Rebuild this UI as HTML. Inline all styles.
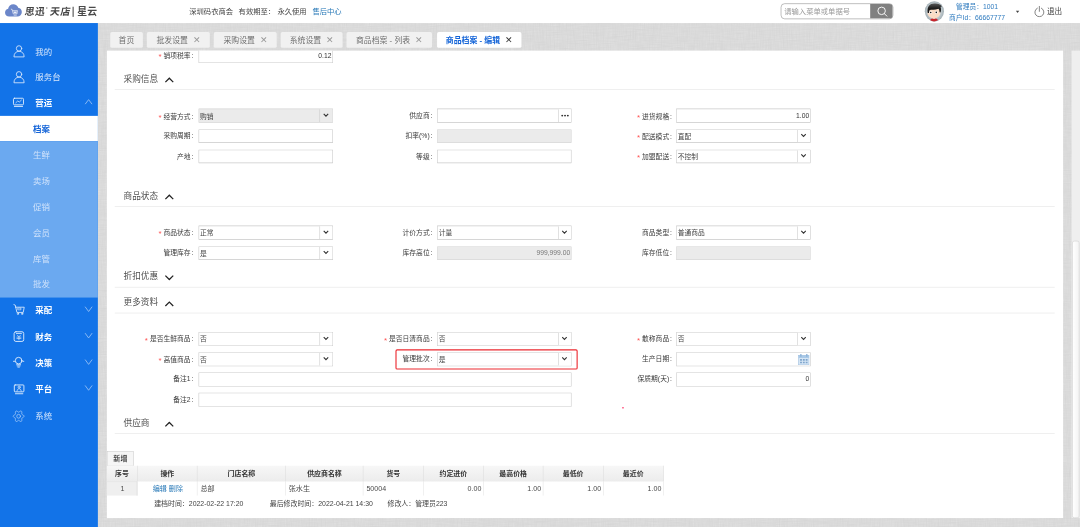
<!DOCTYPE html>
<html lang="zh-CN"><head><meta charset="utf-8"><title>商品档案 - 编辑</title>
<style>
*{box-sizing:border-box;margin:0;padding:0}
html,body{width:1080px;height:527px;overflow:hidden;background:#dbdbdb}
body{font-family:"Liberation Sans","Noto Sans CJK SC",sans-serif;}
#w{position:absolute;left:0;top:0;width:1920px;height:937px;transform:scale(0.5625);transform-origin:0 0;overflow:hidden;background:#dbdbdb;font-size:12px;color:#333}
.a{position:absolute;white-space:nowrap}
#hd{left:0;top:0;width:1920px;height:40.89px;background:#fff}
#sb{left:0;top:40.89px;width:174.22px;height:900px;background:#1273e8}
.tab{height:28.27px;top:56.89px;background:#f1f1f1;border-radius:3px;font-size:14px;color:#707070;line-height:30.04px;text-align:center}
.tab.on{background:#fff;color:#1565d8;font-weight:bold}
.tab i{font-style:normal;margin-left:9px;color:#999;font-weight:normal;font-size:15.500px}
.tab.on i{color:#333}
#pn{left:189.69px;top:90.13px;width:1700.09px;height:830.76px;background:#fff}
.lb{font-size:12.050px;color:#3a3a3a;text-align:right;width:200px;line-height:26px;height:26px}
.lb b{color:#f55;font-weight:normal;margin-right:3.500px;position:relative;top:2px;font-size:14px}
.lb u{text-decoration:none;margin-left:1.500px}
.in{height:24.500px;width:239px;border:1px solid #c9c9c9;border-radius:0.500px;background:#fff;font-size:12px;line-height:22.500px;padding:1.200px 1.200px 0 2.200px;color:#444;overflow:hidden}
.in.dis{background:#ebebeb;border-color:#d6d6d6}
.in.r{text-align:right;padding-top:0;line-height:22px;color:#333}
.in .bt{position:absolute;right:0;top:0;width:23px;height:22.500px;border-left:1px solid #c9c9c9;background:#fff}
.in.dis .bt{background:#ebebeb}
.sec{font-size:15.400px;color:#505050;line-height:20px}
.ln{height:1px;background:#e2e2e2;left:204.44px;width:1670.76px}
</style></head>
<body><div id="w">
<svg class="a" style="left:0;top:0" width="1920" height="937"><filter id="lin" x="0" y="0" width="100%" height="100%"><feTurbulence type="fractalNoise" baseFrequency="0.040 0.700" numOctaves="2" seed="3" result="h"/><feTurbulence type="fractalNoise" baseFrequency="0.700 0.040" numOctaves="2" seed="8" result="v"/><feBlend in="h" in2="v" mode="multiply"/><feColorMatrix type="matrix" values="0 0 0 0 1  0 0 0 0 1  0 0 0 0 1  0.400 0 0 0 -0.050"/></filter><rect width="1920" height="937" fill="#d5d5d5"/><rect width="1920" height="937" filter="url(#lin)"/></svg>
<div class="a" id="hd"></div>
<svg class="a" style="left:7.11px;top:3.56px" width="35.56px" height="28.44px" viewBox="4 2 20 16"><path d="M9.200 16.300C6.800 16.300 5.100 14.600 5.100 12.400c0-2 1.300-3.500 3.100-3.900C8.600 5.900 10.700 3.900 13.400 3.900c2.300 0 4.200 1.400 4.900 3.500 2 .2 3.600 2 3.600 4.300 0 2.600-1.900 4.600-4.400 4.600z" fill="#6b86c9"/><path d="M11 8.900l1.200.3 1.200 4.500h3.600l.5-3.300h-4.800" fill="none" stroke="#f2f5fb" stroke-width="0.700" stroke-linejoin="round"/><path d="M13.600 11.300h3.200l-.3 1.700h-2.500z" fill="#e8edf8"/><path d="M13.800 15.100h3" stroke="#dfe6f5" stroke-width="0.600"/></svg>
<div class="a" style="left:44.09px;font-size:17.500px;color:#444;line-height:21.33px;top:10.84px;font-weight:bold;transform:skewX(-9deg);letter-spacing:0.800px">思迅</div>
<div class="a" style="left:81.42px;top:10.67px;font-size:9px;color:#555;line-height:10px">°</div>
<div class="a" style="left:89.24px;font-size:17.500px;color:#444;line-height:21.33px;top:10.84px;font-weight:bold;transform:skewX(-9deg);letter-spacing:0.800px">天店</div>
<div class="a" style="left:128.89px;top:12.44px;width:2px;height:17.42px;background:#555"></div>
<div class="a" style="left:137.24px;font-size:17.500px;color:#444;line-height:21.33px;top:10.84px;font-weight:bold;color:#4a4a4a;letter-spacing:0.300px">星云</div>
<div class="a" style="left:336.36px;top:7.11px;font-size:13px;color:#444;line-height:26.67px">深圳码衣商会</div>
<div class="a" style="left:424.18px;top:7.11px;font-size:13px;color:#444;line-height:26.67px">有效期至：</div>
<div class="a" style="left:493.16px;top:7.11px;font-size:13px;color:#444;line-height:26.67px">永久使用</div>
<div class="a" style="left:555.38px;top:7.11px;font-size:13px;color:#2a7ab8;line-height:26.67px">售后中心</div>
<div class="a" style="left:1387.73px;top:5.69px;width:200.00px;height:28.09px;border:1px solid #8c8c8c;border-radius:7px;background:#fff;overflow:hidden"><span class="a" style="left:5.500px;top:0;line-height:26.67px;font-size:13px;color:#999">请输入菜单或单据号</span><span class="a" style="right:0;top:0;width:39.47px;height:100%;background:#808080"></span><svg class="a" style="right:7.47px;top:3.73px" width="21.33px" height="21.33px" viewBox="0 0 24 24"><circle cx="10.500" cy="10.500" r="7.500" fill="none" stroke="#fff" stroke-width="1.800"/><path d="M16 16l5 5" stroke="#fff" stroke-width="1.800" stroke-linecap="round"/></svg></div>
<svg class="a" style="left:1632.00px;top:0" width="56.89px" height="42.67px" viewBox="918 0 32 24"><defs><radialGradient id="avg" cx="50%" cy="50%" r="50%"><stop offset="0" stop-color="#e3e8ea"/><stop offset="0.650" stop-color="#c6cfd3"/><stop offset="1" stop-color="#a3afb5"/></radialGradient><linearGradient id="hr" x1="0" y1="0" x2="0" y2="1"><stop offset="0" stop-color="#555"/><stop offset="0.500" stop-color="#1e1e1e"/><stop offset="1" stop-color="#111"/></linearGradient></defs><ellipse cx="934.4" cy="11.300" rx="9.600" ry="10.100" fill="url(#avg)"/><path d="M930 20.100Q930.800 18.200 934 18.200Q937.300 18.200 938.100 20.100Q936.200 21.400 934 21.400Q931.800 21.400 930 20.100z" fill="#c9252c"/><rect x="932.800" y="16.500" width="2.400" height="2.400" fill="#f6cfb4"/><ellipse cx="933.900" cy="13" rx="6.400" ry="5.200" fill="#fbdcc6"/><path d="M927.700 13C926.800 6.500 930 3.600 934.200 3.600C938.500 3.600 941.800 5.200 941.700 6.800C941.300 6.700 940.800 6.800 940.600 7C941.300 9 941 11.200 940.400 12.600L939.500 12.200C939.700 10.600 939.200 9.400 938.400 8.700C935 9.900 931.600 9.500 929.700 9.900C929.200 10.900 929 11.900 929 13z" fill="url(#hr)"/><circle cx="930.600" cy="12.500" r="1.350" fill="#fff"/><circle cx="936.300" cy="12.400" r="1.350" fill="#fff"/><circle cx="930.700" cy="12.500" r="0.800" fill="#1a1a1a"/><circle cx="936.300" cy="12.400" r="0.800" fill="#1a1a1a"/></svg>
<div class="a" style="left:1653.33px;top:3.73px;width:167.11px;text-align:center;font-size:12px;color:#2f7bbf;line-height:17.42px">管理员：1001<br><span style="position:relative;top:1.500px">商户Id：66667777</span></div>
<div class="a" style="left:1805.69px;top:18.67px;width:0;height:0;border-left:3.800px solid transparent;border-right:3.800px solid transparent;border-top:4.500px solid #444"></div>
<svg class="a" style="left:1838.22px;top:9.78px" width="19.56px" height="21.33px" viewBox="0 0 22 24" fill="none" stroke="#444" stroke-width="1.300" stroke-linecap="round"><path d="M7 5A9 9 0 1 0 15 5"/><path d="M11 1.500v10"/></svg>
<div class="a" style="left:1861.33px;top:7.11px;font-size:13.500px;color:#444;line-height:26.67px">退出</div>
<div class="a" id="sb"></div>
<div class="a" style="left:0;top:205.87px;width:174.22px;height:45.33px;background:#fff"></div>
<div class="a" style="left:0;top:251.20px;width:174.22px;height:277.33px;background:#6ba9f0"></div>
<div class="a" style="left:62.76px;top:73.78px;line-height:35.56px;font-size:15px;color:#d6e6fb;font-weight:normal">我的</div>
<div class="a" style="left:62.76px;top:119.11px;line-height:35.56px;font-size:15px;color:#d6e6fb;font-weight:normal">服务台</div>
<div class="a" style="left:62.76px;top:165.33px;line-height:35.56px;font-size:15px;color:#fff;font-weight:600">营运</div>
<div class="a" style="left:58.67px;top:210.67px;line-height:35.56px;font-size:15px;color:#1565d8;font-weight:600">档案</div>
<div class="a" style="left:58.67px;top:256.89px;line-height:35.56px;font-size:15px;color:#cfe2fb;font-weight:normal">生鲜</div>
<div class="a" style="left:58.67px;top:304.00px;line-height:35.56px;font-size:15px;color:#cfe2fb;font-weight:normal">卖场</div>
<div class="a" style="left:58.67px;top:350.22px;line-height:35.56px;font-size:15px;color:#cfe2fb;font-weight:normal">促销</div>
<div class="a" style="left:58.67px;top:395.56px;line-height:35.56px;font-size:15px;color:#cfe2fb;font-weight:normal">会员</div>
<div class="a" style="left:58.67px;top:441.78px;line-height:35.56px;font-size:15px;color:#cfe2fb;font-weight:normal">库管</div>
<div class="a" style="left:58.67px;top:487.11px;line-height:35.56px;font-size:15px;color:#cfe2fb;font-weight:normal">批发</div>
<div class="a" style="left:62.76px;top:533.87px;line-height:35.56px;font-size:15px;color:#fff;font-weight:600">采配</div>
<div class="a" style="left:62.76px;top:581.33px;line-height:35.56px;font-size:15px;color:#fff;font-weight:600">财务</div>
<div class="a" style="left:62.76px;top:627.56px;line-height:35.56px;font-size:15px;color:#fff;font-weight:600">决策</div>
<div class="a" style="left:62.76px;top:673.78px;line-height:35.56px;font-size:15px;color:#fff;font-weight:600">平台</div>
<div class="a" style="left:62.76px;top:721.78px;line-height:35.56px;font-size:15px;color:#d6e6fb;font-weight:normal">系统</div>
<svg class="a" style="left:19.56px;top:76.80px" width="28.44px" height="28.44px" viewBox="11 43.2 16 16" fill="none" stroke-linecap="round" stroke-linejoin="round"><circle cx="18.8" cy="48.300000000000004" r="2.700" stroke="#dbe9fc" stroke-width="0.850"/><path d="M13.700 56.400000000000006c0-3.200 2.200-5.200 5.100-5.200s5.100 2 5.100 5.200z" stroke="#dbe9fc" stroke-width="0.850"/></svg>
<svg class="a" style="left:19.56px;top:123.20px" width="28.44px" height="28.44px" viewBox="11 69.3 16 16" fill="none" stroke-linecap="round" stroke-linejoin="round"><circle cx="18.8" cy="74.39999999999999" r="2.700" stroke="#dbe9fc" stroke-width="0.850"/><path d="M13.700 82.5c0-3.200 2.200-5.200 5.100-5.200s5.100 2 5.100 5.200z" stroke="#dbe9fc" stroke-width="0.850"/></svg>
<svg class="a" style="left:14.22px;top:167.11px" width="39.11px" height="28.44px" viewBox="8 94 22 16" fill="none" stroke-linecap="round" stroke-linejoin="round"><rect x="13.600" y="98.300" width="10" height="6.600" rx="1" stroke="#eef5fe" stroke-width="0.850"/><path d="M16 102.800l1.900-1.800 1.500 1.100 2.100-1.900" stroke="#eef5fe" stroke-width="0.700"/><path d="M14.500 106.500h8.200" stroke="#eef5fe" stroke-width="0.850"/></svg>
<svg class="a" style="left:145.78px;top:172.27px" width="24.89px" height="17.78px" viewBox="82 96.9 14 10" fill="none" stroke-linecap="round" stroke-linejoin="round"><path d="M85.300 104.0l3.200-4.200 3.200 4.200" stroke="#a3c8f6" stroke-width="0.800"/></svg>
<svg class="a" style="left:145.78px;top:540.98px" width="24.89px" height="17.78px" viewBox="82 304.3 14 10" fill="none" stroke-linecap="round" stroke-linejoin="round"><path d="M85.200 307.0l3.300 4.500 3.300-4.500" stroke="#a3c8f6" stroke-width="0.800"/></svg>
<svg class="a" style="left:145.78px;top:588.09px" width="24.89px" height="17.78px" viewBox="82 330.8 14 10" fill="none" stroke-linecap="round" stroke-linejoin="round"><path d="M85.200 333.5l3.300 4.500 3.300-4.500" stroke="#a3c8f6" stroke-width="0.800"/></svg>
<svg class="a" style="left:145.78px;top:634.67px" width="24.89px" height="17.78px" viewBox="82 357 14 10" fill="none" stroke-linecap="round" stroke-linejoin="round"><path d="M85.200 359.7l3.300 4.500 3.300-4.500" stroke="#a3c8f6" stroke-width="0.800"/></svg>
<svg class="a" style="left:145.78px;top:681.42px" width="24.89px" height="17.78px" viewBox="82 383.3 14 10" fill="none" stroke-linecap="round" stroke-linejoin="round"><path d="M85.200 386.0l3.300 4.500 3.300-4.500" stroke="#a3c8f6" stroke-width="0.800"/></svg>
<svg class="a" style="left:17.78px;top:533.33px" width="35.56px" height="32.00px" viewBox="10 300 20 18" fill="none" stroke-linecap="round" stroke-linejoin="round"><path d="M13.800 304.800l1.300.5 1.700 7.300h6.300l1-5.200h-8.600" stroke="#eef5fe" stroke-width="0.800"/><rect x="18" y="308.3" width="2.800" height="1.700" stroke="#eef5fe" stroke-width="0.600"/><circle cx="17.800" cy="314" r="0.700" stroke="#eef5fe" stroke-width="0.700"/><circle cx="22" cy="314" r="0.700" stroke="#eef5fe" stroke-width="0.700"/></svg>
<svg class="a" style="left:17.78px;top:583.11px" width="35.56px" height="32.00px" viewBox="10 328 20 18" fill="none" stroke-linecap="round" stroke-linejoin="round"><rect x="14" y="331.800" width="9.600" height="9.700" rx="1.800" stroke="#eef5fe" stroke-width="0.850"/><path d="M16.300 333.500h5" stroke="#eef5fe" stroke-width="0.800"/><path d="M17.200 335.200l1.600 1.700 1.600-1.700M16.800 337.200h4M16.800 338.600h4M18.800 337v2.800" stroke="#eef5fe" stroke-width="0.600"/></svg>
<svg class="a" style="left:17.78px;top:629.33px" width="35.56px" height="32.00px" viewBox="10 354 20 18" fill="none" stroke-linecap="round" stroke-linejoin="round"><circle cx="18.500" cy="360.800" r="3.300" stroke="#eef5fe" stroke-width="0.850"/><path d="M13.300 361.500h1.200M22.500 361.500h1.200" stroke="#eef5fe" stroke-width="0.800"/><path d="M16.500 364.900h4M17 366.100h3M17.700 367.300h1.600" stroke="#eef5fe" stroke-width="0.750"/></svg>
<svg class="a" style="left:17.78px;top:675.56px" width="35.56px" height="32.00px" viewBox="10 380 20 18" fill="none" stroke-linecap="round" stroke-linejoin="round"><rect x="14.200" y="384.700" width="9.600" height="6.900" rx="0.800" stroke="#eef5fe" stroke-width="0.850"/><circle cx="19" cy="386.900" r="1.100" stroke="#eef5fe" stroke-width="0.650"/><path d="M16.900 390.800c.3-1.700 1-2.300 2.100-2.300s1.800.6 2.100 2.300" stroke="#eef5fe" stroke-width="0.650"/><path d="M15.300 393.500h7.400" stroke="#eef5fe" stroke-width="0.850"/></svg>
<svg class="a" style="left:17.78px;top:723.56px" width="35.56px" height="32.00px" viewBox="10 407 20 18" fill="none" stroke-linecap="round" stroke-linejoin="round"><g transform="translate(18.500 416)"><path d="M5.40 0.00 L5.21 0.60 L4.71 1.10 L4.08 1.46 L3.53 1.73 L3.20 2.03 L3.12 2.50 L3.19 3.16 L3.22 3.93 L3.08 4.66 L2.70 5.14 L2.13 5.26 L1.49 5.03 L0.89 4.61 L0.40 4.23 L0.00 4.07 L-0.40 4.23 L-0.89 4.61 L-1.49 5.03 L-2.13 5.26 L-2.70 5.14 L-3.08 4.66 L-3.22 3.93 L-3.19 3.16 L-3.12 2.50 L-3.20 2.03 L-3.53 1.73 L-4.08 1.46 L-4.71 1.10 L-5.21 0.60 L-5.40 0.00 L-5.21 -0.60 L-4.71 -1.10 L-4.08 -1.46 L-3.53 -1.73 L-3.20 -2.04 L-3.12 -2.50 L-3.19 -3.16 L-3.22 -3.93 L-3.08 -4.66 L-2.70 -5.14 L-2.13 -5.26 L-1.49 -5.03 L-0.89 -4.61 L-0.40 -4.23 L-0.00 -4.07 L0.40 -4.23 L0.89 -4.61 L1.49 -5.03 L2.13 -5.26 L2.70 -5.14 L3.08 -4.66 L3.22 -3.93 L3.19 -3.16 L3.12 -2.50 L3.20 -2.04 L3.53 -1.73 L4.08 -1.46 L4.71 -1.10 L5.21 -0.60Z" stroke="#9fc6f6" stroke-width="0.800"/><circle cx="0" cy="0" r="1.900" stroke="#9fc6f6" stroke-width="0.800"/></g></svg>
<div class="a" id="pn"></div>
<div class="a" style="left:0;top:90.13px;width:1920px;height:40px;overflow:hidden"><div class="a" style="left:0;top:-90.13px;width:1920px;height:200px"><div class="a lb" style="left:343.64px;margin-left:-200px;top:97.96px;margin-top:-13px"><b>*</b>销项税率<u>:</u></div><div class="a in r" style="left:352.53px;top:99.38px;margin-top:-12.250px;">0.12</div></div></div>
<div class="a sec" style="left:219.56px;top:139.91px;margin-top:-10px">采购信息</div>
<svg class="a" style="left:300.80px;top:142.40px;margin-left:-9px;margin-top:-5.500px" width="18" height="11" viewBox="0 0 18 11"><path d="M2 9l7-7 7 7" fill="none" stroke="#222" stroke-width="2.200"/></svg>
<div class="a ln" style="top:158.76px"></div>
<div class="a lb" style="left:343.64px;margin-left:-200px;top:205.69px;margin-top:-13px"><b>*</b>经营方式<u>:</u></div>
<div class="a in dis" style="left:352.53px;top:205.69px;margin-top:-12.250px;">购销<span class="bt"><svg style="position:absolute;left:5px;top:6.500px" width="11" height="8" viewBox="0 0 11 8"><path d="M1.500 1.500l4 4 4-4" fill="none" stroke="#333" stroke-width="2"/></svg></span></div>
<div class="a lb" style="left:768.71px;margin-left:-200px;top:205.69px;margin-top:-13px">供应商<u>:</u></div>
<div class="a in " style="left:776.89px;top:205.69px;margin-top:-12.250px;"><span class="bt"><svg style="position:absolute;left:4px;top:9px" width="15" height="5" viewBox="0 0 15 5"><circle cx="2.500" cy="2.500" r="1.700" fill="#333"/><circle cx="7.500" cy="2.500" r="1.700" fill="#333"/><circle cx="12.500" cy="2.500" r="1.700" fill="#333"/></svg></span></div>
<div class="a lb" style="left:1194.49px;margin-left:-200px;top:205.69px;margin-top:-13px"><b>*</b>进货规格<u>:</u></div>
<div class="a in r" style="left:1201.78px;top:205.69px;margin-top:-12.250px;">1.00</div>
<div class="a lb" style="left:343.64px;margin-left:-200px;top:241.96px;margin-top:-13px">采购周期<u>:</u></div>
<div class="a in " style="left:352.53px;top:241.96px;margin-top:-12.250px;"></div>
<div class="a lb" style="left:768.71px;margin-left:-200px;top:241.96px;margin-top:-13px">扣率(%)<u>:</u></div>
<div class="a in dis" style="left:776.89px;top:241.96px;margin-top:-12.250px;"></div>
<div class="a lb" style="left:1194.49px;margin-left:-200px;top:241.96px;margin-top:-13px"><b>*</b>配送模式<u>:</u></div>
<div class="a in " style="left:1201.78px;top:241.96px;margin-top:-12.250px;">直配<span class="bt"><svg style="position:absolute;left:5px;top:6.500px" width="11" height="8" viewBox="0 0 11 8"><path d="M1.500 1.500l4 4 4-4" fill="none" stroke="#333" stroke-width="2"/></svg></span></div>
<div class="a lb" style="left:343.64px;margin-left:-200px;top:277.78px;margin-top:-13px">产地<u>:</u></div>
<div class="a in " style="left:352.53px;top:277.78px;margin-top:-12.250px;"></div>
<div class="a lb" style="left:768.71px;margin-left:-200px;top:277.78px;margin-top:-13px">等级<u>:</u></div>
<div class="a in " style="left:776.89px;top:277.78px;margin-top:-12.250px;"></div>
<div class="a lb" style="left:1194.49px;margin-left:-200px;top:277.78px;margin-top:-13px"><b>*</b>加盟配送<u>:</u></div>
<div class="a in " style="left:1201.78px;top:277.78px;margin-top:-12.250px;">不控制<span class="bt"><svg style="position:absolute;left:5px;top:6.500px" width="11" height="8" viewBox="0 0 11 8"><path d="M1.500 1.500l4 4 4-4" fill="none" stroke="#333" stroke-width="2"/></svg></span></div>
<div class="a sec" style="left:219.56px;top:347.91px;margin-top:-10px">商品状态</div>
<svg class="a" style="left:300.80px;top:350.40px;margin-left:-9px;margin-top:-5.500px" width="18" height="11" viewBox="0 0 18 11"><path d="M2 9l7-7 7 7" fill="none" stroke="#222" stroke-width="2.200"/></svg>
<div class="a ln" style="top:366.76px"></div>
<div class="a lb" style="left:343.64px;margin-left:-200px;top:413.33px;margin-top:-13px"><b>*</b>商品状态<u>:</u></div>
<div class="a in " style="left:352.53px;top:413.33px;margin-top:-12.250px;">正常<span class="bt"><svg style="position:absolute;left:5px;top:6.500px" width="11" height="8" viewBox="0 0 11 8"><path d="M1.500 1.500l4 4 4-4" fill="none" stroke="#333" stroke-width="2"/></svg></span></div>
<div class="a lb" style="left:768.71px;margin-left:-200px;top:413.33px;margin-top:-13px">计价方式<u>:</u></div>
<div class="a in " style="left:776.89px;top:413.33px;margin-top:-12.250px;">计量<span class="bt"><svg style="position:absolute;left:5px;top:6.500px" width="11" height="8" viewBox="0 0 11 8"><path d="M1.500 1.500l4 4 4-4" fill="none" stroke="#333" stroke-width="2"/></svg></span></div>
<div class="a lb" style="left:1194.49px;margin-left:-200px;top:413.33px;margin-top:-13px">商品类型<u>:</u></div>
<div class="a in " style="left:1201.78px;top:413.33px;margin-top:-12.250px;">普通商品<span class="bt"><svg style="position:absolute;left:5px;top:6.500px" width="11" height="8" viewBox="0 0 11 8"><path d="M1.500 1.500l4 4 4-4" fill="none" stroke="#333" stroke-width="2"/></svg></span></div>
<div class="a lb" style="left:343.64px;margin-left:-200px;top:449.78px;margin-top:-13px">管理库存<u>:</u></div>
<div class="a in " style="left:352.53px;top:449.78px;margin-top:-12.250px;">是<span class="bt"><svg style="position:absolute;left:5px;top:6.500px" width="11" height="8" viewBox="0 0 11 8"><path d="M1.500 1.500l4 4 4-4" fill="none" stroke="#333" stroke-width="2"/></svg></span></div>
<div class="a lb" style="left:768.71px;margin-left:-200px;top:449.78px;margin-top:-13px">库存高位<u>:</u></div>
<div class="a in dis r" style="left:776.89px;top:449.78px;margin-top:-12.250px;"><span style="color:#777">999,999.00</span></div>
<div class="a lb" style="left:1194.49px;margin-left:-200px;top:449.78px;margin-top:-13px">库存低位<u>:</u></div>
<div class="a in dis" style="left:1201.78px;top:449.78px;margin-top:-12.250px;"></div>
<div class="a sec" style="left:219.56px;top:491.02px;margin-top:-10px">折扣优惠</div>
<svg class="a" style="left:300.80px;top:493.51px;margin-left:-9px;margin-top:-5.500px" width="18" height="11" viewBox="0 0 18 11"><path d="M2 2l7 7 7-7" fill="none" stroke="#222" stroke-width="2.200"/></svg>
<div class="a ln" style="top:510.22px"></div>
<div class="a sec" style="left:219.56px;top:538.49px;margin-top:-10px">更多资料</div>
<svg class="a" style="left:300.80px;top:540.98px;margin-left:-9px;margin-top:-5.500px" width="18" height="11" viewBox="0 0 18 11"><path d="M2 9l7-7 7 7" fill="none" stroke="#222" stroke-width="2.200"/></svg>
<div class="a ln" style="top:555.56px"></div>
<div class="a lb" style="left:343.64px;margin-left:-200px;top:602.49px;margin-top:-13px"><b>*</b>是否生鲜商品<u>:</u></div>
<div class="a in " style="left:352.53px;top:602.49px;margin-top:-12.250px;">否<span class="bt"><svg style="position:absolute;left:5px;top:6.500px" width="11" height="8" viewBox="0 0 11 8"><path d="M1.500 1.500l4 4 4-4" fill="none" stroke="#333" stroke-width="2"/></svg></span></div>
<div class="a lb" style="left:768.71px;margin-left:-200px;top:602.49px;margin-top:-13px"><b>*</b>是否日清商品<u>:</u></div>
<div class="a in " style="left:776.89px;top:602.49px;margin-top:-12.250px;">否<span class="bt"><svg style="position:absolute;left:5px;top:6.500px" width="11" height="8" viewBox="0 0 11 8"><path d="M1.500 1.500l4 4 4-4" fill="none" stroke="#333" stroke-width="2"/></svg></span></div>
<div class="a lb" style="left:1194.49px;margin-left:-200px;top:602.49px;margin-top:-13px"><b>*</b>散称商品<u>:</u></div>
<div class="a in " style="left:1201.78px;top:602.49px;margin-top:-12.250px;">否<span class="bt"><svg style="position:absolute;left:5px;top:6.500px" width="11" height="8" viewBox="0 0 11 8"><path d="M1.500 1.500l4 4 4-4" fill="none" stroke="#333" stroke-width="2"/></svg></span></div>
<div class="a lb" style="left:343.64px;margin-left:-200px;top:638.40px;margin-top:-13px"><b>*</b>高值商品<u>:</u></div>
<div class="a in " style="left:352.53px;top:638.40px;margin-top:-12.250px;">否<span class="bt"><svg style="position:absolute;left:5px;top:6.500px" width="11" height="8" viewBox="0 0 11 8"><path d="M1.500 1.500l4 4 4-4" fill="none" stroke="#333" stroke-width="2"/></svg></span></div>
<div class="a lb" style="left:768.71px;margin-left:-200px;top:638.40px;margin-top:-13px">管理批次<u>:</u></div>
<div class="a in " style="left:776.89px;top:638.40px;margin-top:-12.250px;">是<span class="bt"><svg style="position:absolute;left:5px;top:6.500px" width="11" height="8" viewBox="0 0 11 8"><path d="M1.500 1.500l4 4 4-4" fill="none" stroke="#333" stroke-width="2"/></svg></span></div>
<div class="a lb" style="left:1194.49px;margin-left:-200px;top:638.40px;margin-top:-13px">生产日期<u>:</u></div>
<div class="a in " style="left:1201.78px;top:638.40px;margin-top:-12.250px;"><svg style="position:absolute;right:1px;top:1.500px" width="20" height="20.500" viewBox="0 0 18 18" preserveAspectRatio="none"><rect x="0.500" y="2.500" width="17" height="15" fill="#d6e6f5" stroke="#8fb4d9"/><rect x="0.500" y="2.500" width="17" height="4" fill="#a9c9e8"/><rect x="3" y="0.500" width="2.500" height="4" fill="#8fb4d9"/><rect x="12.500" y="0.500" width="2.500" height="4" fill="#8fb4d9"/><path d="M3 9.500h3M7.500 9.500h3M12 9.500h3M3 13.500h3M7.500 13.500h3M12 13.500h3" stroke="#7fa5cc" stroke-width="2.500"/></svg></div>
<div class="a lb" style="left:343.64px;margin-left:-200px;top:674.31px;margin-top:-13px">备注1<u>:</u></div>
<div class="a in " style="left:352.53px;top:674.31px;margin-top:-12.250px;width:663.11px;"></div>
<div class="a lb" style="left:1194.49px;margin-left:-200px;top:674.31px;margin-top:-13px">保质期(天)<u>:</u></div>
<div class="a in r" style="left:1201.78px;top:674.31px;margin-top:-12.250px;">0</div>
<div class="a lb" style="left:343.64px;margin-left:-200px;top:710.40px;margin-top:-13px">备注2<u>:</u></div>
<div class="a in " style="left:352.53px;top:710.40px;margin-top:-12.250px;width:663.11px;"></div>
<div class="a" style="left:702.58px;top:620.62px;width:324.27px;height:36.44px;border:2.300px solid #ec2a30;border-radius:3px"></div>
<div class="a" style="left:1105.78px;top:723.56px;width:3px;height:2px;background:#f36"></div>
<div class="a sec" style="left:219.56px;top:752.36px;margin-top:-10px">供应商</div>
<svg class="a" style="left:300.98px;top:754.84px;margin-left:-9px;margin-top:-5.500px" width="18" height="11" viewBox="0 0 18 11"><path d="M2 9l7-7 7 7" fill="none" stroke="#222" stroke-width="2.200"/></svg>
<div class="a ln" style="top:769.78px"></div>
<div class="a" style="left:190.22px;top:802.49px;width:47.64px;height:26.67px;border:1px solid #cfcfcf;background:#f6f6f6;font-size:12.500px;color:#222;text-align:center;line-height:26.31px;font-weight:500">新增</div>
<div class="a" style="left:190.22px;top:828.44px;width:989.51px;height:27.56px;background:linear-gradient(#f7f7f7,#ececec)"></div>
<div class="a" style="left:190.22px;top:828.44px;width:54.40px;height:27.56px;border-right:1px solid #ddd;font-size:12.300px;font-weight:bold;color:#333;text-align:center;line-height:29.33px">序号</div>
<div class="a" style="left:244.62px;top:828.44px;width:106.67px;height:27.56px;border-right:1px solid #ddd;font-size:12.300px;font-weight:bold;color:#333;text-align:center;line-height:29.33px">操作</div>
<div class="a" style="left:351.29px;top:828.44px;width:156.98px;height:27.56px;border-right:1px solid #ddd;font-size:12.300px;font-weight:bold;color:#333;text-align:center;line-height:29.33px">门店名称</div>
<div class="a" style="left:508.27px;top:828.44px;width:138.13px;height:27.56px;border-right:1px solid #ddd;font-size:12.300px;font-weight:bold;color:#333;text-align:center;line-height:29.33px">供应商名称</div>
<div class="a" style="left:646.40px;top:828.44px;width:106.67px;height:27.56px;border-right:1px solid #ddd;font-size:12.300px;font-weight:bold;color:#333;text-align:center;line-height:29.33px">货号</div>
<div class="a" style="left:753.07px;top:828.44px;width:106.67px;height:27.56px;border-right:1px solid #ddd;font-size:12.300px;font-weight:bold;color:#333;text-align:center;line-height:29.33px">约定进价</div>
<div class="a" style="left:859.73px;top:828.44px;width:106.31px;height:27.56px;border-right:1px solid #ddd;font-size:12.300px;font-weight:bold;color:#333;text-align:center;line-height:29.33px">最高价格</div>
<div class="a" style="left:966.04px;top:828.44px;width:106.67px;height:27.56px;border-right:1px solid #ddd;font-size:12.300px;font-weight:bold;color:#333;text-align:center;line-height:29.33px">最低价</div>
<div class="a" style="left:1072.71px;top:828.44px;width:107.02px;height:27.56px;border-right:1px solid #ddd;font-size:12.300px;font-weight:bold;color:#333;text-align:center;line-height:29.33px">最近价</div>
<div class="a" style="left:190.22px;top:856.00px;width:54.22px;height:24.89px;background:#efefef;border-right:1px solid #ddd;border-top:1px solid #ddd"></div>
<div class="a" style="left:190.22px;top:856.00px;width:54.40px;height:24.89px;border-right:1px solid #e4e4e4;font-size:12.600px;color:#4a4a4a;text-align:center;padding:0 3px 0 5px;line-height:25.96px">1</div>
<div class="a" style="left:244.62px;top:856.00px;width:106.67px;height:24.89px;border-right:1px solid #e4e4e4;font-size:12.600px;color:#4a4a4a;text-align:center;padding:0 3px 0 5px;line-height:25.96px"><span style="color:#2a7ab8">编辑 删除</span></div>
<div class="a" style="left:351.29px;top:856.00px;width:156.98px;height:24.89px;border-right:1px solid #e4e4e4;font-size:12.600px;color:#4a4a4a;text-align:left;padding:0 3px 0 5px;line-height:25.96px">总部</div>
<div class="a" style="left:508.27px;top:856.00px;width:138.13px;height:24.89px;border-right:1px solid #e4e4e4;font-size:12.600px;color:#4a4a4a;text-align:left;padding:0 3px 0 5px;line-height:25.96px">张水生</div>
<div class="a" style="left:646.40px;top:856.00px;width:106.67px;height:24.89px;border-right:1px solid #e4e4e4;font-size:12.600px;color:#4a4a4a;text-align:left;padding:0 3px 0 5px;line-height:25.96px">50004</div>
<div class="a" style="left:753.07px;top:856.00px;width:106.67px;height:24.89px;border-right:1px solid #e4e4e4;font-size:12.600px;color:#4a4a4a;text-align:right;padding:0 3px 0 5px;line-height:25.96px">0.00</div>
<div class="a" style="left:859.73px;top:856.00px;width:106.31px;height:24.89px;border-right:1px solid #e4e4e4;font-size:12.600px;color:#4a4a4a;text-align:right;padding:0 3px 0 5px;line-height:25.96px">1.00</div>
<div class="a" style="left:966.04px;top:856.00px;width:106.67px;height:24.89px;border-right:1px solid #e4e4e4;font-size:12.600px;color:#4a4a4a;text-align:right;padding:0 3px 0 5px;line-height:25.96px">1.00</div>
<div class="a" style="left:1072.71px;top:856.00px;width:107.02px;height:24.89px;border-right:1px solid #e4e4e4;font-size:12.600px;color:#4a4a4a;text-align:right;padding:0 3px 0 5px;line-height:25.96px">1.00</div>
<div class="a" style="left:274.13px;top:883.56px;font-size:12.300px;color:#444;line-height:23.11px">建档时间：2022-02-22 17:20</div>
<div class="a" style="left:479.64px;top:883.56px;font-size:12.300px;color:#444;line-height:23.11px">最后修改时间：2022-04-21 14:30</div>
<div class="a" style="left:688.89px;top:883.56px;font-size:12.300px;color:#444;line-height:23.11px">修改人：管理员223</div>
<div class="a tab" style="left:195.56px;width:58.67px">首页</div>
<div class="a tab" style="left:261.33px;width:111.64px">批发设置<i>✕</i></div>
<div class="a tab" style="left:380.44px;width:111.47px">采购设置<i>✕</i></div>
<div class="a tab" style="left:499.02px;width:109.87px">系统设置<i>✕</i></div>
<div class="a tab" style="left:616.00px;width:152.00px">商品档案 - 列表<i>✕</i></div>
<div class="a tab on" style="left:776.89px;width:149.87px">商品档案 - 编辑<i>✕</i></div>
<div class="a" style="left:1905.24px;top:90.13px;width:17.78px;height:830.76px;background:#efefef"></div>
<div class="a" style="left:1905.60px;top:427.56px;width:12.98px;height:493.33px;background:linear-gradient(90deg,#fff,#f4f4f4);border:1px solid #d2d2d2;border-radius:4px"></div>
</div></body></html>
